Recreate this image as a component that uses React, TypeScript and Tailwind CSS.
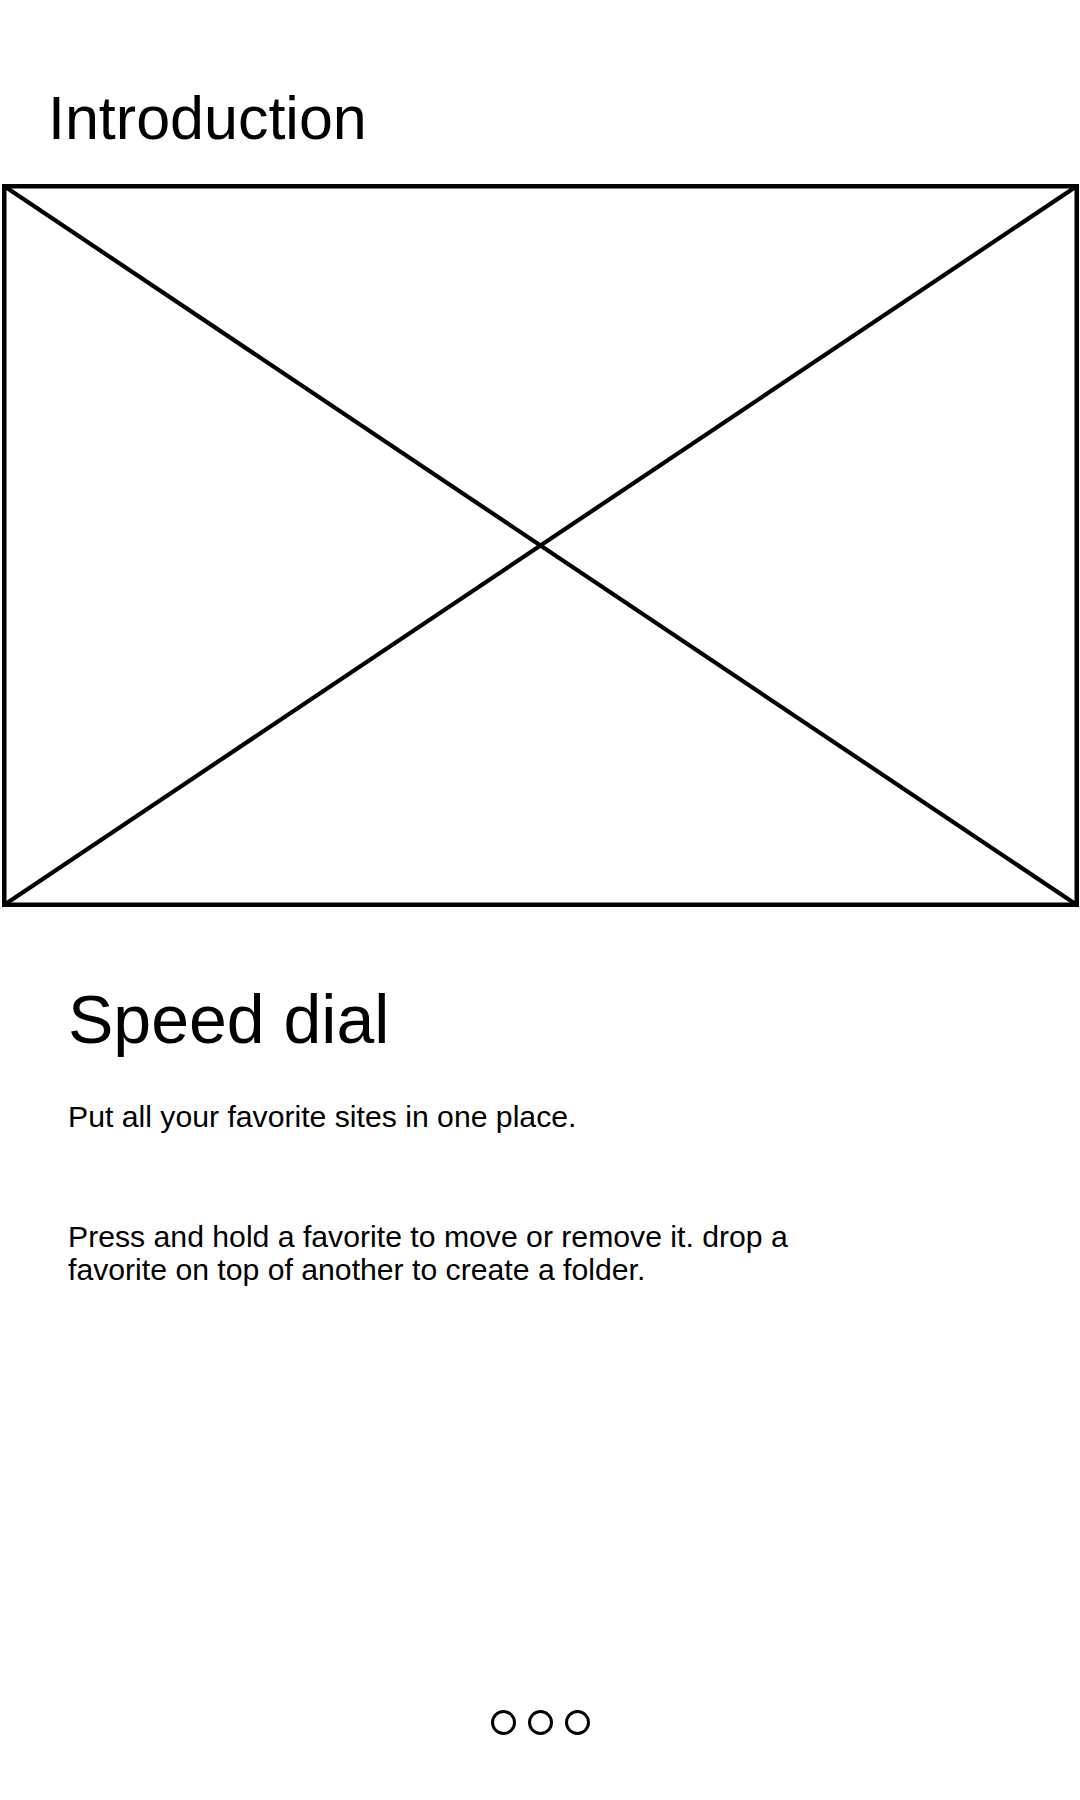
export default function App() {
  return (
    <div className="w-[1080px] h-[1800px] bg-white text-black font-['Liberation_Sans',Arial,sans-serif]">
      <h1 className="pt-[88px] pl-[48px] text-[61px] leading-[61px] font-normal">Introduction</h1>

      {/* image placeholder */}
      <div className="mt-[35px] ml-[2px] w-[1077px] h-[723px]">
        <svg width="1077" height="723" viewBox="0 0 1077 723" className="block">
          <rect x="2.25" y="2.25" width="1072.5" height="718.5" fill="none" stroke="#000" strokeWidth="4.5" />
          <line x1="2" y1="2" x2="1075" y2="721" stroke="#000" strokeWidth="4.2" />
          <line x1="1075" y1="2" x2="2" y2="721" stroke="#000" strokeWidth="4.2" />
        </svg>
      </div>

      <div className="pl-[68px]">
        <h2 className="mt-[78px] text-[68px] leading-[68px] font-normal">Speed dial</h2>
        <p className="mt-[49px] text-[30.2px] leading-[30px]">Put all your favorite sites in one place.</p>
        <p className="mt-[88px] w-[760px] text-[30.2px] leading-[33px]">
          Press and hold a favorite to move or remove it. drop a favorite on top of another to create a folder.
        </p>
      </div>

      <div className="mt-[424px] flex justify-center gap-[12px]">
        <span className="w-[25px] h-[25px] rounded-full border-[3px] border-black" />
        <span className="w-[25px] h-[25px] rounded-full border-[3px] border-black" />
        <span className="w-[25px] h-[25px] rounded-full border-[3px] border-black" />
      </div>
    </div>
  );
}
